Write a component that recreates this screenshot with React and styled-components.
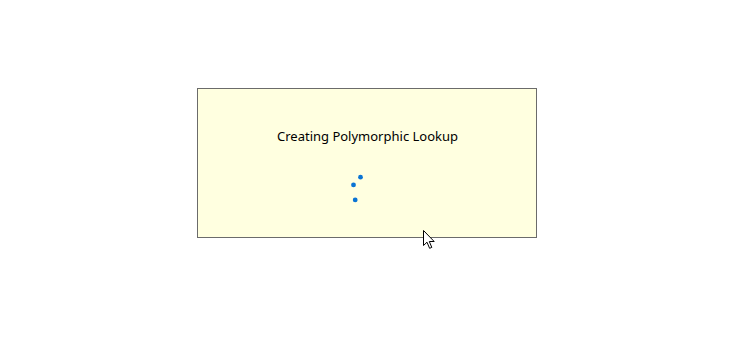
import React from "react";
import styled, { createGlobalStyle } from "styled-components";

const Global = createGlobalStyle`
  html, body { margin: 0; padding: 0; background: #ffffff; }
  body { font-family: "Noto Sans", "Open Sans", sans-serif; }
`;

const Page = styled.div`
  position: relative;
  width: 750px;
  height: 338px;
  padding: 88px 0 0 197px;
  box-sizing: border-box;
`;

const Dialog = styled.div`
  width: 340px;
  height: 150px;
  box-sizing: border-box;
  border: 1px solid #6b6b6b;
  background: #ffffe0;
  display: flex;
  flex-direction: column;
  align-items: center;
  padding-top: 39px;
`;

const Message = styled.div`
  font-size: 13px;
  line-height: 17px;
  color: #000000;
  white-space: nowrap;
  margin-left: 1px;
`;

const Spinner = styled.svg`
  display: block;
  margin-top: 26px;
  margin-left: 1px;
`;

const Cursor = styled.svg`
  position: absolute;
  left: 423px;
  top: 230px;
`;

const dots = [
  { x: 360.3, y: 177 },
  { x: 353.3, y: 184.7 },
  { x: 355, y: 199.7 },
];

export default function App() {
  const cx = 367.8;
  const cy = 190.8;
  return (
    <>
      <Global />
      <Page>
        <Dialog>
          <Message>Creating Polymorphic Lookup</Message>
          <Spinner width="40" height="40" viewBox="0 0 40 40">
            {dots.map((d, i) => (
              <circle
                key={i}
                cx={20 + d.x - cx}
                cy={20 + d.y - cy}
                r="2.4"
                fill="#0a74d4"
              />
            ))}
          </Spinner>
        </Dialog>
        <Cursor width="13" height="20" viewBox="0 0 13 20">
          <path
            d="M0.5 0.5 L0.5 15.5 L4 12.2 L6.6 18.3 L8.8 17.4 L6.3 11.5 L11.2 11.5 Z"
            fill="#ffffff"
            stroke="#000000"
            strokeWidth="1"
            strokeLinejoin="miter"
          />
        </Cursor>
      </Page>
    </>
  );
}
